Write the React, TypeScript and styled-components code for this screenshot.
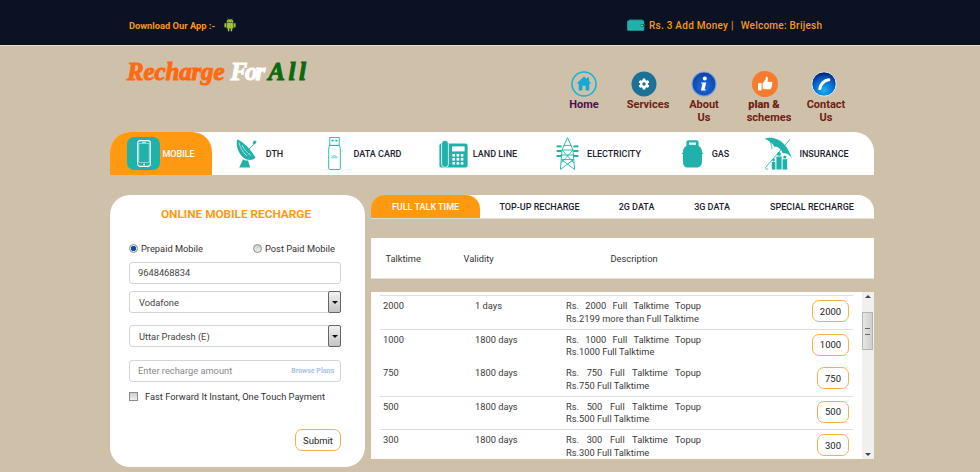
import React from 'react'
import styled, { createGlobalStyle } from 'styled-components'

const GlobalStyle = createGlobalStyle`
  html, body {
    margin: 0;
    padding: 0;
    background: #cfc0aa;
    font-family: Roboto, "Liberation Sans", sans-serif;
    overflow: hidden;
  }
  * { box-sizing: border-box; }
`

const teal = '#20b2aa'
const orange = '#ff9a10'

const TopBar = styled.div`
  height: 46px;
  background: #0b1224;
  border-bottom: 1px solid #e4dccd;
  display: flex;
  align-items: center;
  color: #f7981d;
  font-weight: 500;
  padding: 5px 0 0 129px;
`
const AppLabel = styled.span`
  width: 95px;
  font-weight: 700;
  font-size: 9.3px;
`
const Account = styled.div`
  margin-left: 391px;
  display: flex;
  align-items: center;
  font-size: 10px;
  letter-spacing: 0.25px;
`
const Balance = styled.span`
  margin: 0 7px 0 4px;
`

const Page = styled.div`
  width: 764px;
  margin-left: 110px;
`
const Header = styled.div`
  height: 86px;
  display: flex;
  justify-content: space-between;
`
const Logo = styled.div`
  margin: 11px 0 0 17px;
  font-family: "Liberation Serif", serif;
  font-style: italic;
  font-weight: 700;
  font-size: 25px;
  line-height: 30px;
  -webkit-text-stroke: 1px currentColor;
  white-space: nowrap;
  display: flex;
`
const LogoWord = styled.span<{ $color: string; $mr: number; $ls: number }>`
  color: ${(p) => p.$color};
  margin-right: ${(p) => p.$mr}px;
  letter-spacing: ${(p) => p.$ls}px;
`
const Menu = styled.div`
  display: flex;
  margin: 25px 26px 0 0;
`
const MenuItem = styled.div<{ $w: number; $color: string; $iconShift: number; $textShift: number }>`
  width: ${(p) => p.$w}px;
  display: flex;
  flex-direction: column;
  align-items: center;
  color: ${(p) => p.$color};
  font-size: 11px;
  font-weight: 700;
  line-height: 13px;
  text-align: center;
  svg {
    display: block;
    margin-bottom: 1px;
    margin-right: ${(p) => p.$iconShift}px;
  }
  span {
    padding-left: ${(p) => p.$textShift}px;
  }
`
const PlanLine = styled.b`
  display: inline-block;
  margin-right: 10px;
`

const MainTabs = styled.div`
  height: 43px;
  background: #fff;
  border-radius: 20px 20px 0 0;
  display: flex;
  margin-bottom: 20px;
`
const MainTab = styled.div<{ $w: number; $gap: number; $active?: boolean }>`
  width: ${(p) => p.$w}px;
  display: flex;
  align-items: center;
  justify-content: center;
  gap: ${(p) => p.$gap}px;
  font-size: 9px;
  font-weight: 500;
  color: ${(p) => (p.$active ? '#fff' : '#1d2230')};
  background: ${(p) => (p.$active ? orange : 'transparent')};
  border-radius: ${(p) => (p.$active ? '20px 20px 0 0' : '0')};
  white-space: nowrap;
`
const PhoneTile = styled.div`
  width: 33px;
  height: 33px;
  border-radius: 7px;
  background: ${teal};
  display: flex;
  align-items: center;
  justify-content: center;
`

const Columns = styled.div`
  display: flex;
  gap: 6px;
  align-items: flex-start;
`
const Card = styled.div`
  width: 255px;
  height: 272px;
  background: #fff;
  border-radius: 20px;
  padding: 12px 24px 0 19px;
`
const CardTitle = styled.div`
  color: ${orange};
  font-size: 11.8px;
  font-weight: 700;
  text-align: center;
  line-height: 14px;
  margin: 0 0 0 2px;
`
const RadioRow = styled.div`
  display: flex;
  justify-content: space-between;
  margin: 20px 6px 0 0;
  height: 15px;
  align-items: center;
`
const RadioLabel = styled.label`
  display: flex;
  align-items: center;
  gap: 3px;
  font-size: 9.3px;
  color: #333;
`
const Radio = styled.span<{ $on?: boolean }>`
  width: 9px;
  height: 9px;
  border-radius: 50%;
  border: 1px solid #8d8d8d;
  background: ${(p) =>
    p.$on
      ? 'radial-gradient(circle, #0b4fa8 0 2.4px, #eee 3px)'
      : 'linear-gradient(#ccc, #eee)'};
`
const Field = styled.input`
  display: block;
  width: 212px;
  height: 22px;
  border: 1px solid #d4d4d4;
  border-radius: 3px;
  padding: 0 8px 1px;
  font: 400 9.3px Roboto, sans-serif;
  color: #444;
  background: #fff;
  outline: none;
  &::placeholder {
    color: #888;
  }
`
const NumberField = styled(Field)`
  margin-top: 6px;
`
const SelectBox = styled.div<{ $mt: number }>`
  width: 212px;
  height: 22px;
  margin-top: ${(p) => p.$mt}px;
  border: 1px solid #d4d4d4;
  border-radius: 3px;
  display: flex;
  align-items: center;
  justify-content: space-between;
  padding-left: 9px;
  font-size: 9.3px;
  color: #444;
`
const SelectArrow = styled.span`
  width: 13px;
  height: 22px;
  margin-right: -1px;
  border: 1px solid #666;
  border-radius: 2px;
  background: linear-gradient(#f2f2f2, #c4c4c4);
  display: flex;
  align-items: center;
  justify-content: center;
  &::after {
    content: '';
    border: 3px solid transparent;
    border-top: 3px solid #111;
    margin-top: 3px;
  }
`
const AmountWrap = styled.div`
  position: relative;
  margin-top: 13px;
  width: 212px;
`
const BrowsePlans = styled.span`
  position: absolute;
  right: 7px;
  top: 7px;
  font-size: 7px;
  font-weight: 700;
  color: #a9c3e2;
`
const CheckRow = styled.label`
  display: flex;
  align-items: center;
  gap: 7px;
  height: 12px;
  margin-top: 8px;
  font-size: 9.3px;
  color: #333;
  white-space: nowrap;
`
const CheckBox = styled.span`
  width: 9px;
  height: 9px;
  border: 1px solid #8d8d8d;
  background: linear-gradient(#ccc, #eee);
`
const SubmitRow = styled.div`
  display: flex;
  justify-content: flex-end;
  width: 212px;
  margin-top: 27px;
`
const OutlineButton = styled.button<{ $w: number }>`
  width: ${(p) => p.$w}px;
  height: 22px;
  padding: 0;
  border: 1px solid #f5b04e;
  border-radius: 7px;
  background: #fff;
  color: #222;
  font: 400 9.5px Roboto, sans-serif;
`

const Right = styled.div`
  width: 503px;
`
const SubTabs = styled.div`
  height: 24px;
  background: #fff;
  border-radius: 16px 16px 0 0;
  border-bottom: 1px solid #e2e0dc;
  display: flex;
  margin-bottom: 19px;
`
const SubTab = styled.div<{ $w: number; $active?: boolean }>`
  width: ${(p) => p.$w}px;
  display: flex;
  align-items: center;
  justify-content: center;
  font-size: 9px;
  font-weight: 500;
  white-space: nowrap;
  color: ${(p) => (p.$active ? '#fff' : '#1d2230')};
  background: ${(p) => (p.$active ? orange : 'transparent')};
  border-radius: ${(p) => (p.$active ? '14px 14px 0 0' : '0')};
`
const TableHead = styled.div`
  height: 41px;
  background: #fff;
  border-bottom: 1px solid #e4e2df;
  display: grid;
  grid-template-columns: 78px 147px 1fr;
  align-items: center;
  padding-left: 14.5px;
  font-size: 9.3px;
  color: #333;
  margin-bottom: 13px;
`
const ListBox = styled.div`
  height: 167px;
  background: #fff;
  display: flex;
  overflow: hidden;
`
const Rows = styled.div`
  width: 491px;
  padding: 3px 9px 0 9px;
  overflow: hidden;
`
const Row = styled.div<{ $line: boolean }>`
  height: 33.5px;
  border-top: 1px solid ${(p) => (p.$line ? '#dedede' : 'transparent')};
  display: grid;
  grid-template-columns: 92px 91px 135px 1fr;
  padding: 4px 4px 0 3px;
  font-size: 9.3px;
  line-height: 12.7px;
  color: #3a3a3a;
`
const Justified = styled.div`
  text-align: justify;
  text-align-last: justify;
`
const SecondLine = styled.div`
  white-space: nowrap;
`
const PriceCell = styled.div`
  display: flex;
  justify-content: flex-end;
`
const Scrollbar = styled.div`
  width: 12px;
  background: #f0f0f0;
  position: relative;
`
const ScrollThumb = styled.div`
  position: absolute;
  top: 20px;
  left: 0;
  width: 11px;
  height: 38px;
  border: 1px solid #b5b5b5;
  background: linear-gradient(90deg, #e6e6e6, #cfcfcf);
  display: flex;
  align-items: center;
  justify-content: center;
  &::after {
    content: '';
    width: 5px;
    height: 5px;
    border-top: 1px solid #666;
    border-bottom: 1px solid #666;
  }
`
const ScrollArrow = styled.span<{ $down?: boolean }>`
  position: absolute;
  left: 3px;
  ${(p) => (p.$down ? 'bottom: 3px;' : 'top: 3px;')}
  border: 3px solid transparent;
  ${(p) => (p.$down ? 'border-top: 3px solid #444; border-bottom: 0;' : 'border-bottom: 3px solid #444; border-top: 0;')}
`

const Android = () => (
  <svg width="12" height="14" viewBox="0 0 12 14" fill="#9dc23c">
    <path d="M2.5 4.6a3.5 3.3 0 0 1 7 0z" />
    <rect x="2.5" y="5" width="7" height="5.6" rx="0.8" />
    <rect x="0.4" y="5" width="1.6" height="4.6" rx="0.8" />
    <rect x="10" y="5" width="1.6" height="4.6" rx="0.8" />
    <rect x="3.8" y="10" width="1.6" height="3.6" rx="0.8" />
    <rect x="6.6" y="10" width="1.6" height="3.6" rx="0.8" />
    <path d="M3.6 0.4l1.2 1.8M8.4 0.4L7.2 2.2" stroke="#9dc23c" strokeWidth="0.5" />
    <circle cx="4.6" cy="3" r="0.4" fill="#0b1224" />
    <circle cx="7.4" cy="3" r="0.4" fill="#0b1224" />
  </svg>
)

const Wallet = () => (
  <svg width="18" height="12" viewBox="0 0 18 12">
    <path d="M2 0.5h13a1 1 0 0 1 1 1V3H2z" fill="#148a84" />
    <rect x="0.2" y="1.6" width="17" height="10.2" rx="1.2" fill={teal} />
    <rect x="13.6" y="5" width="4.2" height="3" rx="1" fill="#0f6f6a" />
    <circle cx="15" cy="6.5" r="0.7" fill="#bff" />
  </svg>
)

const HomeIcon = () => (
  <svg width="26" height="26" viewBox="0 0 26 26">
    <circle cx="13" cy="13" r="12" fill="none" stroke="#12b4dc" strokeWidth="1.6" />
    <path d="M13 5.4L5.6 12.4h2.1v7h3.7v-4.6h3.2v4.6h3.7v-7h2.1l-2.4-2.3V6.4h-2v1.8z" fill="#12a9d6" />
  </svg>
)

const ServicesIcon = () => (
  <svg width="26" height="26" viewBox="0 0 26 26">
    <circle cx="13" cy="13" r="12.5" fill="#1c7296" />
    <g fill="#fff">
      {[0, 60, 120].map((a) => (
        <rect key={a} x="11.6" y="7.6" width="2.8" height="10.8" rx="0.5" transform={`rotate(${a} 13 13)`} />
      ))}
      <circle cx="13" cy="13" r="4" />
    </g>
    <circle cx="13" cy="13" r="1.7" fill="#1c7296" />
  </svg>
)

const AboutIcon = () => (
  <svg width="26" height="26" viewBox="0 0 26 26">
    <defs>
      <radialGradient id="infoBlue" cx="50%" cy="60%" r="60%">
        <stop offset="0%" stopColor="#1f6fe0" />
        <stop offset="100%" stopColor="#0c3fa0" />
      </radialGradient>
    </defs>
    <circle cx="13" cy="13" r="12" fill="url(#infoBlue)" stroke="#7ea6de" strokeWidth="1.2" />
    <circle cx="13.8" cy="7.6" r="2" fill="#fff" />
    <path d="M10.4 11.4h4.8l-1.6 7h1.4l-0.3 1.2h-4.8l1.6-7h-1.4z" fill="#fff" />
  </svg>
)

const PlanIcon = () => (
  <svg width="26" height="26" viewBox="0 0 26 26">
    <circle cx="13" cy="13" r="13" fill="#f77b2c" />
    <rect x="6" y="12" width="3.6" height="7.6" rx="0.8" fill="#fff" />
    <path d="M10.6 12.2l2.8-3.4 0.6-3.2c1.8-0.2 2.4 1.6 1.6 5.2h3.6c1.2 0 1.4 1.2 0.9 1.9 0.6 0.7 0.3 1.6-0.3 1.9 0.3 0.8 0 1.6-0.7 1.8 0.2 1-0.4 1.8-1.3 1.8h-4.4c-1.2 0-2-0.5-2.8-0.8z" fill="#fff" />
  </svg>
)

const ContactIcon = () => (
  <svg width="26" height="26" viewBox="0 0 26 26">
    <defs>
      <radialGradient id="contactBlue" cx="50%" cy="75%" r="70%">
        <stop offset="0%" stopColor="#16b4f2" />
        <stop offset="70%" stopColor="#0459c4" />
        <stop offset="100%" stopColor="#03266e" />
      </radialGradient>
    </defs>
    <circle cx="13" cy="13" r="12.2" fill="url(#contactBlue)" stroke="#e4eef6" strokeWidth="1" />
    <path d="M8.8 17.8c0.4-4.2 4.4-8.6 9-9" stroke="#fff" strokeWidth="3" strokeLinecap="round" fill="none" />
  </svg>
)

const PhoneIcon = () => (
  <svg width="14" height="27" viewBox="0 0 15 29">
    <rect x="0.7" y="0.7" width="13.6" height="27.6" rx="2.4" fill="none" stroke="#fff" strokeWidth="1.2" />
    <rect x="2" y="4" width="11" height="20" fill="none" stroke="#fff" strokeWidth="0.5" />
    <rect x="5.5" y="2" width="4" height="0.9" fill="#fff" />
    <circle cx="7.5" cy="26.2" r="1" fill="#fff" />
  </svg>
)

const DishIcon = () => (
  <svg width="23" height="29" viewBox="0 0 23 29" fill={teal}>
    <path d="M1.2 0.4c4.8 1.2 14.4 10 18.2 18.4 -2.4 2.6-7.2 3-10.6 0.8C3.6 16.2 -0.8 8 1.2 0.4z" />
    <path d="M3 3.6c1 5 3.8 9.6 8 13.4M6 6c2 4.4 5 8 9 10.4" stroke="#fff" strokeWidth="0.6" fill="none" />
    <path d="M11 12l7-6.6" stroke={teal} strokeWidth="1" />
    <path d="M18 1.2l2.6 1.4-1.6 3-2.4-1.2z" />
    <path d="M7 20.4l2.6 1.2 2.4-0.2 2.2 7.2H3.2z" />
  </svg>
)

const UsbIcon = () => (
  <svg width="13" height="33" viewBox="0 0 13 33" fill="none" stroke={teal} strokeWidth="0.9">
    <rect x="1.8" y="0.6" width="9.4" height="7.8" />
    <rect x="3.6" y="2.8" width="2" height="1.8" fill={teal} stroke="none" />
    <rect x="7.4" y="2.8" width="2" height="1.8" fill={teal} stroke="none" />
    <path d="M1.8 8.4L0.7 11v20.6a0.9 0.9 0 0 0 0.9 0.9h9.8a0.9 0.9 0 0 0 0.9-0.9V11l-1.1-2.6z" />
    <path d="M3.6 21a3 3 0 0 1 5.8 0M4.8 21.6a1.8 1.8 0 0 1 3.4 0" strokeWidth="1" opacity="0.7" />
  </svg>
)

const LandLineIcon = () => (
  <svg width="29" height="28" viewBox="0 0 29 28">
    <rect x="0.4" y="3.6" width="28.2" height="24" rx="2" fill={teal} />
    <rect x="2.6" y="0.4" width="6.8" height="27" rx="3.2" fill={teal} stroke="#fff" strokeWidth="0.8" />
    <rect x="13" y="6.4" width="12.6" height="5" fill="#fff" />
    {[14, 18, 22].map((y) =>
      [13.4, 17.6, 21.8].map((x) => <rect key={`${x}-${y}`} x={x} y={y} width="2.6" height="2.6" fill="#fff" />)
    )}
  </svg>
)

const TowerIcon = () => (
  <svg width="23" height="33" viewBox="0 0 23 33" fill="none" stroke={teal} strokeWidth="0.9">
    <path d="M11.5 0.6L6 13l-1.6 19.4M11.5 0.6L17 13l1.6 19.4M6 13h11M4.8 18h13.4M5.4 22.6h12.2M6 13l12 13M17 13L5 26M4.4 32.4L17.6 22.6M18.6 32.4L5.4 22.6" />
    <path d="M7.6 8.4h7.8" />
    <rect x="0.6" y="8.4" width="5" height="2" fill={teal} stroke="none" />
    <rect x="17.4" y="8.4" width="5" height="2" fill={teal} stroke="none" />
    <rect x="0.6" y="13" width="5" height="2" fill={teal} stroke="none" />
    <rect x="17.4" y="13" width="5" height="2" fill={teal} stroke="none" />
    <rect x="0.6" y="18" width="5" height="2" fill={teal} stroke="none" />
    <rect x="17.4" y="18" width="5" height="2" fill={teal} stroke="none" />
  </svg>
)

const GasIcon = () => (
  <svg width="21" height="28" viewBox="0 0 21 28" fill={teal}>
    <path fillRule="evenodd" d="M6.4 0.2h8.2a2 2 0 0 1 2 2v4.4H4.4V2.2a2 2 0 0 1 2-2zM7 2.6v2.2h7V2.6z" />
    <path d="M7 5.4h7c3.6 0 6 2.6 6 6.4v1h1V14h-1v7.4c0 4-2.6 6-5.6 6H5.6C2.6 27.4 1 25.4 1 21.4V14H0v-1.2h1v-1c0-3.8 2.4-6.4 6-6.4z" />
  </svg>
)

const InsuranceIcon = () => (
  <svg width="29" height="33" viewBox="0 0 29 33" fill={teal}>
    <path d="M0.6 1.6C8 -0.6 21 0.8 27.8 21 24.6 16.8 22 16 19 16.4 17 12 14 9.4 10.4 9.8 8.6 6.6 5 3.6 0.6 1.6z" />
    <path d="M6 5c1.6 2.4 2.2 5 1.8 7.4" stroke={teal} fill="none" strokeWidth="0.8" />
    <path d="M26 2.4L1.4 30.6a1.6 1.6 0 0 0 2.4 1.4" stroke={teal} fill="none" strokeWidth="0.9" />
    <circle cx="15" cy="17" r="1.9" />
    <path d="M12.4 19.6h5.2v13h-5.2z" />
    <circle cx="20.8" cy="20" r="1.6" />
    <path d="M18.6 22.2h4.6v10.4h-4.6z" />
    <circle cx="9.6" cy="23" r="1.4" />
    <path d="M7.8 25h3.6v7.6H7.8z" />
  </svg>
)

const menu = [
  { w: 60, color: '#4b1050', iconShift: 0, textShift: 0, icon: <HomeIcon />, label: <>Home</> },
  { w: 60, color: '#6f2012', iconShift: 0, textShift: 8, icon: <ServicesIcon />, label: <>Services</> },
  { w: 60, color: '#6f2012', iconShift: 0, textShift: 0, icon: <AboutIcon />, label: <>About<br />Us</> },
  { w: 70, color: '#6f2012', iconShift: 9, textShift: 0, icon: <PlanIcon />, label: <><PlanLine>plan &amp;</PlanLine><br />schemes</> },
  { w: 44, color: '#6f2012', iconShift: 4, textShift: 0, icon: <ContactIcon />, label: <>Contact<br />Us</> }
]

const mainTabs = [
  { w: 102, gap: 2, label: 'MOBILE', active: true, icon: <PhoneTile><PhoneIcon /></PhoneTile> },
  { w: 95, gap: 7, label: 'DTH', icon: <DishIcon /> },
  { w: 115, gap: 13, label: 'DATA CARD', icon: <UsbIcon /> },
  { w: 112, gap: 5, label: 'LAND LINE', icon: <LandLineIcon /> },
  { w: 129, gap: 8, label: 'ELECTRICITY', icon: <TowerIcon /> },
  { w: 85, gap: 9, label: 'GAS', icon: <GasIcon /> },
  { w: 117, gap: 6, label: 'INSURANCE', icon: <InsuranceIcon /> }
]

const subTabs = [
  { w: 109, label: 'FULL TALK TIME', active: true },
  { w: 119, label: 'TOP-UP RECHARGE' },
  { w: 75, label: '2G DATA' },
  { w: 76, label: '3G DATA' },
  { w: 124, label: 'SPECIAL RECHARGE' }
]

const plans = [
  { amount: '2000', validity: '1 days', extra: 'Rs.2199 more than Full Talktime', line: true, btn: 37 },
  { amount: '1000', validity: '1800 days', extra: 'Rs.1000 Full Talktime', line: true, btn: 37 },
  { amount: '750', validity: '1800 days', extra: 'Rs.750 Full Talktime', line: false, btn: 32 },
  { amount: '500', validity: '1800 days', extra: 'Rs.500 Full Talktime', line: true, btn: 32 },
  { amount: '300', validity: '1800 days', extra: 'Rs.300 Full Talktime', line: true, btn: 32 }
]

export default function App() {
  return (
    <>
      <GlobalStyle />
      <TopBar>
        <AppLabel>Download Our App :-</AppLabel>
        <Android />
        <Account>
          <Wallet />
          <Balance>Rs. 3 Add Money |</Balance>
          Welcome: Brijesh
        </Account>
      </TopBar>
      <Page>
        <Header>
          <Logo>
            <LogoWord $color="#ff6a10" $mr={6} $ls={-0.15}>Recharge</LogoWord>
            <LogoWord $color="#ffffff" $mr={5} $ls={-2}>For</LogoWord>
            <LogoWord $color="#0b6a0b" $mr={0} $ls={3.5}>All</LogoWord>
          </Logo>
          <Menu>
            {menu.map((item, i) => (
              <MenuItem key={i} $w={item.w} $color={item.color} $iconShift={item.iconShift} $textShift={item.textShift}>
                {item.icon}
                <span>{item.label}</span>
              </MenuItem>
            ))}
          </Menu>
        </Header>
        <MainTabs>
          {mainTabs.map((tab) => (
            <MainTab key={tab.label} $w={tab.w} $gap={tab.gap} $active={tab.active}>
              {tab.icon}
              {tab.label}
            </MainTab>
          ))}
        </MainTabs>
        <Columns>
          <Card>
            <CardTitle>ONLINE MOBILE RECHARGE</CardTitle>
            <RadioRow>
              <RadioLabel><Radio $on />Prepaid Mobile</RadioLabel>
              <RadioLabel><Radio />Post Paid Mobile</RadioLabel>
            </RadioRow>
            <NumberField readOnly value="9648468834" />
            <SelectBox $mt={7}>Vodafone<SelectArrow /></SelectBox>
            <SelectBox $mt={12}>Uttar Pradesh (E)<SelectArrow /></SelectBox>
            <AmountWrap>
              <Field readOnly placeholder="Enter recharge amount" />
              <BrowsePlans>Browse Plans</BrowsePlans>
            </AmountWrap>
            <CheckRow><CheckBox />Fast Forward It Instant, One Touch Payment</CheckRow>
            <SubmitRow><OutlineButton $w={46}>Submit</OutlineButton></SubmitRow>
          </Card>
          <Right>
            <SubTabs>
              {subTabs.map((tab) => (
                <SubTab key={tab.label} $w={tab.w} $active={tab.active}>{tab.label}</SubTab>
              ))}
            </SubTabs>
            <TableHead>
              <span>Talktime</span>
              <span>Validity</span>
              <span>Description</span>
            </TableHead>
            <ListBox>
              <Rows>
                {plans.map((plan) => (
                  <Row key={plan.amount} $line={plan.line}>
                    <span>{plan.amount}</span>
                    <span>{plan.validity}</span>
                    <div>
                      <Justified>Rs. {plan.amount} Full Talktime Topup</Justified>
                      <SecondLine>{plan.extra}</SecondLine>
                    </div>
                    <PriceCell>
                      <OutlineButton $w={plan.btn}>{plan.amount}</OutlineButton>
                    </PriceCell>
                  </Row>
                ))}
              </Rows>
              <Scrollbar>
                <ScrollArrow />
                <ScrollThumb />
                <ScrollArrow $down />
              </Scrollbar>
            </ListBox>
          </Right>
        </Columns>
      </Page>
    </>
  )
}
